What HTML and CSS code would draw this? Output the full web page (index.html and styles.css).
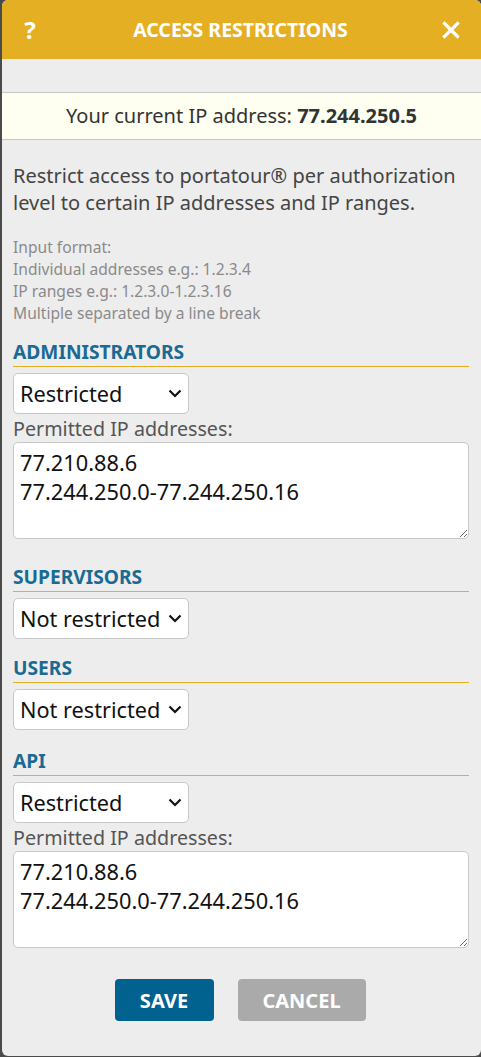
FILE: index.html
```html
<!DOCTYPE html>
<html lang="en">
<head>
  <meta charset="UTF-8">
  <title>Access Restrictions</title>
  <link rel="stylesheet" href="styles.css">
</head>
<body>

  <div class="dialog">
    <div class="dialog-header">
      <span class="help">?</span>
      <h2>ACCESS RESTRICTIONS</h2>
      <span class="close">
        <svg width="18" height="18" viewBox="0 0 18 18">
          <path d="M2.5 2.5 L15.5 15.5 M15.5 2.5 L2.5 15.5" stroke="#fff" stroke-width="3.2" stroke-linecap="square"/>
        </svg>
      </span>
    </div>

    <div class="current-ip">Your current IP address: <b>77.244.250.5</b></div>

    <div class="content">
      <p class="intro">Restrict access to portatour® per authorization level to certain IP addresses and IP ranges.</p>

      <p class="hint">
        Input format:<br>
        Individual addresses e.g.: 1.2.3.4<br>
        IP ranges e.g.: 1.2.3.0-1.2.3.16<br>
        Multiple separated by a line break
      </p>

      <div class="section">
        <h3>ADMINISTRATORS</h3>
        <select>
          <option>Not restricted</option>
          <option selected>Restricted</option>
        </select>
        <label>Permitted IP addresses:</label>
        <textarea>77.210.88.6
77.244.250.0-77.244.250.16</textarea>
      </div>

      <div class="section after-text">
        <h3>SUPERVISORS</h3>
        <select>
          <option selected>Not restricted</option>
          <option>Restricted</option>
        </select>
      </div>

      <div class="section">
        <h3>USERS</h3>
        <select>
          <option selected>Not restricted</option>
          <option>Restricted</option>
        </select>
      </div>

      <div class="section api">
        <h3>API</h3>
        <select>
          <option>Not restricted</option>
          <option selected>Restricted</option>
        </select>
        <label>Permitted IP addresses:</label>
        <textarea>77.210.88.6
77.244.250.0-77.244.250.16</textarea>
      </div>

      <div class="buttons">
        <button class="save">SAVE</button>
        <button class="cancel">CANCEL</button>
      </div>
    </div>
  </div>

</body>
</html>
```

FILE: styles.css
```css
body {
  margin: 0;
  background: #4b4b4b;
  font-family: "Noto Sans", sans-serif;
}
.dialog {
  margin-left: 2px;
  width: 479px;
  height: 1056px;
  background: #ededed;
  border-radius: 6px;
  overflow: hidden;
}
.dialog-header {
  height: 59px;
  background: #e5af24;
  display: flex;
  align-items: center;
  justify-content: space-between;
  padding: 0 18px 0 16px;
  color: #fff;
}
.dialog-header h2 {
  margin: 0;
  font-size: 19.5px;
  font-weight: bold;
}
.help {
  width: 24px;
  text-align: center;
  font-size: 24px;
  font-weight: bold;
}
.close {
  display: flex;
  justify-content: center;
  width: 24px;
}
.current-ip {
  margin-top: 33px;
  height: 46px;
  line-height: 46px;
  background: #fefff0;
  border-top: 1px solid #c8c8c8;
  border-bottom: 1px solid #c8c8c8;
  text-align: center;
  font-size: 20px;
  color: #333;
}
.content {
  padding: 0 12px 0 11px;
}
.intro {
  margin: 22px 0 0;
  font-size: 20px;
  line-height: 27px;
  color: #444;
}
.hint {
  margin: 20px 0 0;
  font-size: 15.6px;
  line-height: 22px;
  color: #8a8a8a;
}
.section {
  margin-top: 16px;
}
.section + .section {
  margin-top: 17px;
}
.section.after-text {
  margin-top: 26px;
}
.section.api {
  margin-top: 19px;
}
.section h3 {
  margin: 0;
  font-size: 19.2px;
  line-height: 24px;
  padding-bottom: 2px;
  border-bottom: 1px solid #e5af24;
  color: #1a6a94;
}
select {
  display: block;
  margin-top: 6px;
  width: 176px;
  height: 41px;
  padding: 0 6px;
  font-family: "Noto Sans", sans-serif;
  font-size: 21.7px;
  color: #111;
  background: #fff url("data:image/svg+xml,%3Csvg xmlns='http://www.w3.org/2000/svg' width='14' height='9' viewBox='0 0 14 9'%3E%3Cpath d='M1.5 1.5 L7 7 L12.5 1.5' fill='none' stroke='%23111' stroke-width='2.2'/%3E%3C/svg%3E") no-repeat right 6px center;
  border: 1px solid #c8c8c8;
  border-radius: 5px;
  appearance: none;
}
label {
  display: block;
  margin-top: 2px;
  font-size: 19.7px;
  line-height: 26px;
  color: #555;
}
textarea {
  display: block;
  box-sizing: border-box;
  width: 456px;
  height: 97px;
  padding: 5px 6px;
  font-family: "Noto Sans", sans-serif;
  font-size: 21.8px;
  line-height: 29px;
  color: #111;
  background: #fff;
  border: 1px solid #c8c8c8;
  border-radius: 5px;
}
.buttons {
  display: flex;
  justify-content: center;
  gap: 24px;
  margin-top: 31px;
  padding-right: 2px;
}
.buttons button {
  height: 42px;
  border: none;
  border-radius: 4px;
  color: #fff;
  font-family: "Noto Sans", sans-serif;
  font-size: 20px;
  font-weight: bold;
}
.save {
  width: 99px;
  background: #01618f;
}
.cancel {
  width: 128px;
  background: #aaaaaa;
}
```
